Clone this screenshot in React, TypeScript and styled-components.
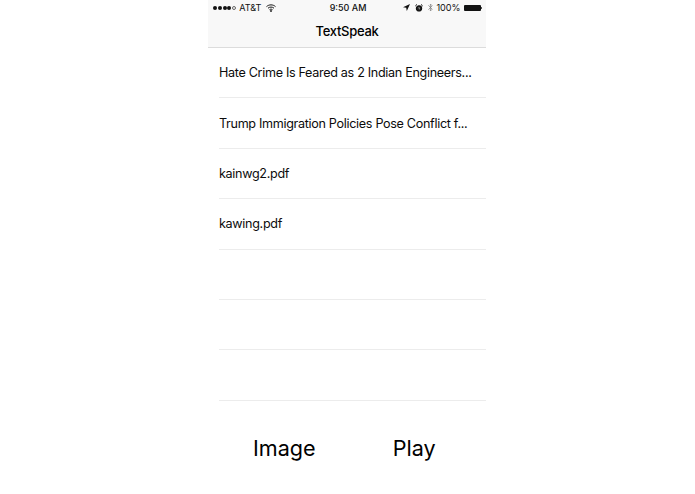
import React from "react";
import styled, { createGlobalStyle } from "styled-components";

const Global = createGlobalStyle`
  html, body { margin: 0; padding: 0; background: #fff; }
  body { font-family: Inter, "Liberation Sans", sans-serif; color: #000; }
`;

const Page = styled.div`
  width: 695px;
  height: 494px;
  display: flex;
  justify-content: center;
  overflow: hidden;
`;

const Phone = styled.div`
  width: 278px;
  margin-left: -1px;
  display: flex;
  flex-direction: column;
`;

const Header = styled.header`
  height: 47px;
  background: #f8f8f8;
  border-bottom: 1px solid #dcdcdc;
  display: flex;
  flex-direction: column;
`;

const StatusBar = styled.div`
  height: 15px;
  padding: 0 4px 0 5px;
  display: flex;
  align-items: center;
  justify-content: space-between;
  font-size: 9.1px;
  color: #111;
`;

const StatusSide = styled.div<{ $end?: boolean }>`
  flex: 1;
  display: flex;
  align-items: center;
  gap: 3px;
  justify-content: ${(p) => (p.$end ? "flex-end" : "flex-start")};
`;

const Clock = styled.div`
  font-weight: 500;
  font-size: 9px;
  margin-left: 1px;
`;

const Signal = styled.div`
  display: flex;
  gap: 0.8px;
  align-items: center;
`;

const Dot = styled.span<{ $empty?: boolean }>`
  width: 4px;
  height: 4px;
  box-sizing: border-box;
  border-radius: 50%;
  background: ${(p) => (p.$empty ? "transparent" : "#111")};
  border: ${(p) => (p.$empty ? "0.6px solid #666" : "none")};
`;

const Battery = styled.div`
  width: 17px;
  height: 6px;
  background: #111;
  border-radius: 1px;
  margin-right: 1.5px;
  position: relative;
  &::after {
    content: "";
    position: absolute;
    right: -1.5px;
    top: 2px;
    width: 1px;
    height: 2px;
    background: #555;
  }
`;

const Title = styled.div`
  flex: 1;
  display: flex;
  align-items: center;
  justify-content: center;
  font-size: 13px;
  font-weight: 500;
  letter-spacing: -0.3px;
  padding-bottom: 1px;
`;

const List = styled.ul`
  list-style: none;
  margin: 0;
  padding: 0 0 0 11px;
`;

const Row = styled.li`
  height: 48.4px;
  padding-top: 1px;
  border-bottom: 1px solid #ececec;
  display: flex;
  align-items: center;
  font-size: 12.6px;
  letter-spacing: -0.32px;
  line-height: 16px;
  color: #0c0c0c;
`;

const Actions = styled.div`
  flex: 1;
  display: flex;
  padding: 29px 0 0 45px;
  gap: 77px;
`;

const Action = styled.button`
  border: 0;
  background: none;
  padding: 0;
  height: 36px;
  font: 400 21.6px/36px Inter, "Liberation Sans", sans-serif;
  color: #000;
`;

const rows = [
  "Hate Crime Is Feared as 2 Indian Engineers...",
  "Trump Immigration Policies Pose Conflict f...",
  "kainwg2.pdf",
  "kawing.pdf",
  "",
  "",
  "",
];

export default function App() {
  return (
    <Page>
      <Global />
      <Phone>
        <Header>
          <StatusBar>
            <StatusSide>
              <Signal>
                <Dot />
                <Dot />
                <Dot />
                <Dot />
                <Dot $empty />
              </Signal>
              <span>AT&amp;T</span>
              <svg width="10" height="8" viewBox="0 0 10 8" style={{ marginLeft: 2 }}>
                <path d="M0.5 2.6C3 0.3 7 0.3 9.5 2.6M2 4.2C3.7 2.7 6.3 2.7 8 4.2M3.5 5.7C4.4 5 5.6 5 6.5 5.7" fill="none" stroke="#111" strokeWidth="1" />
                <circle cx="5" cy="7" r="0.9" fill="#111" />
              </svg>
            </StatusSide>
            <Clock>9:50 AM</Clock>
            <StatusSide $end>
              <svg width="7" height="7" viewBox="0 0 7 7" style={{ marginRight: 2 }}>
                <path d="M7 0L0 3.2L3.2 3.8L3.8 7Z" fill="#111" />
              </svg>
              <svg width="8" height="8" viewBox="0 0 8 8" style={{ marginRight: 2 }}>
                <circle cx="4" cy="4.4" r="2.6" fill="#222" stroke="#111" strokeWidth="1.2" />
                <path d="M4 3V4.5L5 5" stroke="#ddd" strokeWidth="0.6" fill="none" />
                <path d="M0.3 2L2 0.4M7.7 2L6 0.4" stroke="#111" strokeWidth="1" />
              </svg>
              <svg width="5" height="9" viewBox="0 0 5 9">
                <path d="M0.4 2.3L4.2 6.2L2.4 8V1L4.2 2.8L0.4 6.7" fill="none" stroke="#777" strokeWidth="0.7" />
              </svg>
              <span>100%</span>
              <Battery />
            </StatusSide>
          </StatusBar>
          <Title>TextSpeak</Title>
        </Header>
        <List>
          {rows.map((text, i) => (
            <Row key={i}>{text}</Row>
          ))}
        </List>
        <Actions>
          <Action>Image</Action>
          <Action>Play</Action>
        </Actions>
      </Phone>
    </Page>
  );
}
